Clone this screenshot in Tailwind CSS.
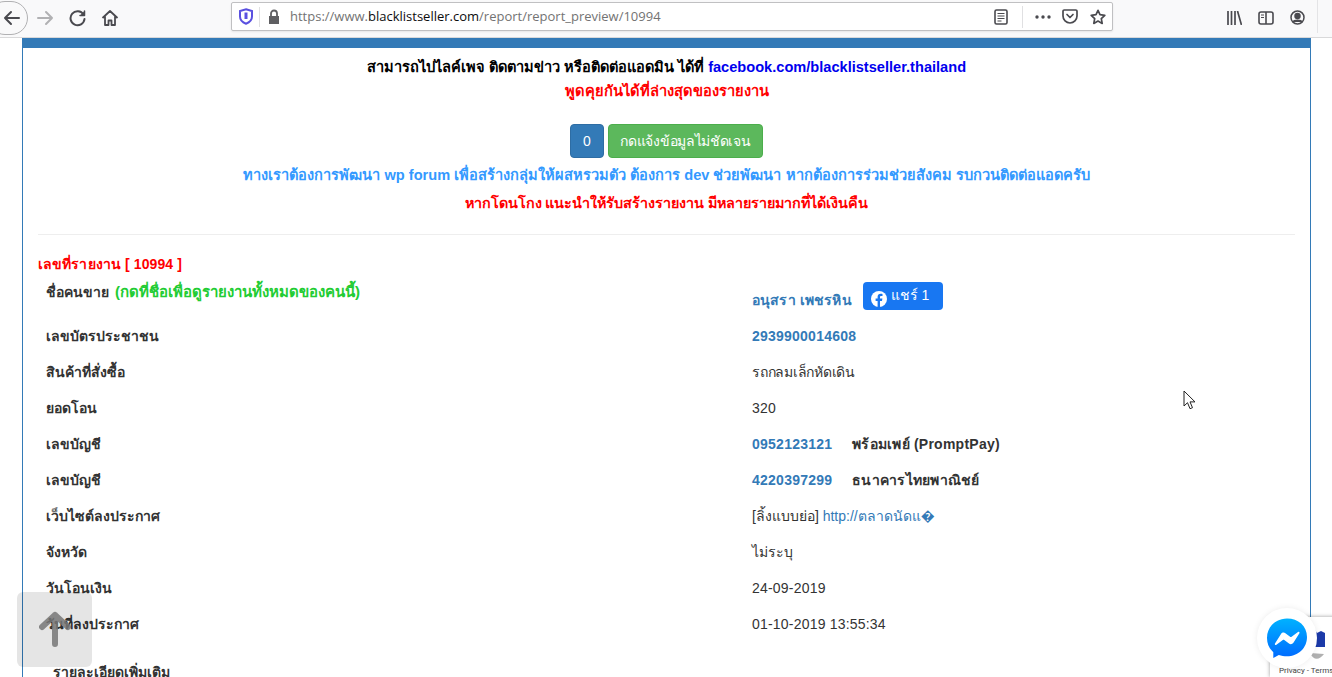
<!DOCTYPE html>
<html><head><meta charset="utf-8"><script src="https://cdn.jsdelivr.net/npm/@tailwindcss/browser@4"></script></head>
<body class="bg-white">
<div class="relative w-[1332px] h-[677px] overflow-hidden bg-white font-['Liberation_Sans','Noto_Sans',sans-serif] text-[14px] text-[#333]">
  <!-- toolbar -->
  <header class="h-[38px] bg-[#f9f9fa] border-b border-[#d9d9da] flex items-center relative">
    <div class="w-[40px] h-[34px] -ml-[12px] mr-[8px] mt-[-1px] rounded-full border border-[#b1b1b3] bg-[#f9f9fa] flex items-center justify-center shrink-0">
      <svg class="ml-[8px]" width="18" height="18" viewBox="0 0 18 18" fill="none" stroke="#4a4a4f" stroke-width="2" stroke-linecap="round" stroke-linejoin="round"><path d="M16 9H2M8 3L2 9l6 6"/></svg>
    </div>
    <svg class="mr-[15px] -mt-[2px] shrink-0" width="18" height="18" viewBox="0 0 18 18" fill="none" stroke="#b1b1b3" stroke-width="2" stroke-linecap="round" stroke-linejoin="round"><path d="M2 9h14M10 3l6 6-6 6"/></svg>
    <svg class="mr-[14px] -mt-[2px] shrink-0" width="18" height="18" viewBox="0 0 18 18" fill="none" stroke="#4a4a4f" stroke-width="2" stroke-linecap="round"><path d="M14.5 5.5A7 7 0 1 0 15.5 10"/><path d="M15.5 2v4.5H11" fill="#4a4a4f" stroke-linejoin="round" stroke-width="1.5"/></svg>
    <svg class="mr-[112px] -mt-[2px] shrink-0" width="18" height="18" viewBox="0 0 18 18" fill="none" stroke="#4a4a4f" stroke-width="1.8" stroke-linejoin="round"><path d="M1.5 9L9 2l7.5 7M4 7.5V16h3.5v-4.5h3V16H14V7.5"/></svg>
    <div class="w-[882px] h-[29px] mt-[-4px] bg-white border border-[#c0c0c2] rounded-[2px] flex items-center shrink-0 shadow-[0_1px_2px_rgba(0,0,0,0.08)]">
      <svg class="ml-[6px] mr-[5px] shrink-0" width="16" height="17" viewBox="0 0 16 17" fill="none"><path d="M8 1.2l6 1.8v5.5c0 3.5-2.6 5.9-6 7.2-3.4-1.3-6-3.7-6-7.2V3z" stroke="#5a50e0" stroke-width="2" fill="#fff"/><path d="M8 4.5v6.5" stroke="#5a50e0" stroke-width="3"/></svg>
      <div class="w-px h-[20px] bg-[#e0e0e2] mr-[6px]"></div>
      <svg class="mr-[8px] shrink-0" width="16" height="16" viewBox="0 0 16 16"><path d="M3 7h10v8H3z" fill="#5f5f62"/><path d="M5 7V4.5a3 3 0 0 1 6 0V7" fill="none" stroke="#5f5f62" stroke-width="1.8"/></svg>
      <div class="mt-[1px] font-['Open_Sans',sans-serif] text-[13px] text-[#737373] whitespace-nowrap">https://www.<span class="text-[#0c0c0d]">blacklistseller.com</span>/report/report_preview/10994</div>
      <div class="ml-auto flex items-center">
        <svg width="14" height="16" viewBox="0 0 14 16" fill="none" stroke="#4a4a4f"><rect x="1" y="1" width="12" height="14" rx="1.5" stroke-width="1.6"/><path d="M3.5 4.5h7M3.5 7h7M3.5 9.5h7M3.5 12h4" stroke-width="1.2"/></svg>
        <div class="w-px h-[22px] bg-[#e0e0e2] ml-[14px] mr-[12px]"></div>
        <svg class="mr-[11px]" width="16" height="4" viewBox="0 0 16 4" fill="#4a4a4f"><circle cx="2" cy="2" r="1.7"/><circle cx="8" cy="2" r="1.7"/><circle cx="14" cy="2" r="1.7"/></svg>
        <svg class="mr-[12px]" width="16" height="15" viewBox="0 0 16 15" fill="none" stroke="#4a4a4f" stroke-width="1.7"><path d="M2.2 1h11.6A1.2 1.2 0 0 1 15 2.2V7a7 7 0 0 1-14 0V2.2A1.2 1.2 0 0 1 2.2 1z"/><path d="M5 5.5l3 3 3-3" stroke-linecap="round" stroke-linejoin="round"/></svg>
        <svg class="mr-[6px]" width="16" height="16" viewBox="0 0 16 16" fill="none" stroke="#4a4a4f" stroke-width="1.7" stroke-linejoin="round"><path d="M8 1.3l2 4.4 4.8.6-3.5 3.3.9 4.8L8 12.1l-4.2 2.3.9-4.8L1.200 6.300 6 5.700z"/></svg>
      </div>
    </div>
    <svg class="ml-[114px] -mt-[2px] shrink-0" width="15" height="14" viewBox="0 0 15 14" fill="none" stroke="#4a4a4f" stroke-width="1.700"><path d="M1 0v14M4.500 0v14M8 0v14M10.500 0l4 14"/></svg>
    <svg class="ml-[16px] -mt-[2px] shrink-0" width="16" height="14" viewBox="0 0 16 14" fill="none" stroke="#4a4a4f" stroke-width="1.600"><rect x="1" y="1" width="14" height="12" rx="2"/><path d="M8 1v12"/><path d="M3 4h3M3 6.500h3" stroke-width="1.200"/></svg>
    <svg class="ml-[16px] -mt-[2px] shrink-0" width="15" height="15" viewBox="0 0 15 15" fill="none" stroke="#4a4a4f" stroke-width="1.500"><circle cx="7.500" cy="7.500" r="6.500"/><circle cx="7.500" cy="6" r="2.500" fill="#4a4a4f"/><path d="M3 12c1-2.500 8-2.500 9 0" fill="#4a4a4f"/></svg>
    <div class="absolute left-[1317px] top-0 w-px h-[33px] bg-[#e4e4e6]"></div>
  </header>

  <!-- panel -->
  <main class="mx-[22px] w-[1289px] border-x border-[#337ab7]">
    <div class="h-[10px] bg-[#337ab7]"></div>
    <section class="px-[15px] text-center font-bold">
      <p class="mt-[9px] leading-[20px] text-[14.6px] text-black">สามารถไปไลค์เพจ ติดตามข่าว หรือติดต่อแอดมิน ได้ที่ <a class="text-[#0000ee]">facebook.com/blacklistseller.thailand</a></p>
      <p class="mt-[4px] leading-[20px] text-[14.7px] text-[#ff0000]">พูดคุยกันได้ที่ล่างสุดของรายงาน</p>
      <div class="mt-[23px] flex justify-center gap-[4px] font-normal text-white">
        <span class="h-[34px] w-[34px] flex items-center justify-center rounded-[4px] bg-[#337ab7] border border-[#2e6da4]">0</span>
        <span class="h-[34px] w-[155px] flex items-center justify-center rounded-[4px] bg-[#5cb85c] border border-[#4cae4c] tracking-[-0.3px]">กดแจ้งข้อมูลไม่ชัดเจน</span>
      </div>
      <p class="mt-[7px] leading-[20px] text-[14.6px] text-[#3399ff]">ทางเราต้องการพัฒนา wp forum เพื่อสร้างกลุ่มให้ผสหรวมตัว ต้องการ dev ช่วยพัฒนา หากต้องการร่วมช่วยสังคม รบกวนติดต่อแอดครับ</p>
      <p class="mt-[8px] leading-[20px] text-[14.35px] text-[#ff0000]">หากโดนโกง แนะนำให้รับสร้างรายงาน มีหลายรายมากที่ได้เงินคืน</p>
    </section>
    <hr class="mx-[15px] mt-[21px] border-t border-[#eeeeee]">
    <section class="px-[15px]">
      <p class="mt-[19px] leading-[20px] font-bold tracking-[0.1px] text-[#ff0000]">เลขที่รายงาน [ 10994 ]</p>
      <dl class="grid grid-cols-[706px_1fr] pl-[8px] auto-rows-[36px] mt-[8px]">
        <dt class="font-bold pt-[2px] leading-[16px]">ชื่อคนขาย <span class="ml-[2px] text-[15px] text-[#22cc33]">(กดที่ชื่อเพื่อดูรายงานทั้งหมดของคนนี้)</span></dt>
        <dd class="flex items-start font-bold text-[#337ab7] leading-[20px]"><span class="mt-[8px] tracking-[0.15px]">อนุสรา เพชรหิน</span>
          <span class="ml-[11px] h-[28px] w-[80px] rounded-[4px] bg-[#1877f2] text-white font-normal flex items-center pl-[8px] gap-[4px]">
            <svg class="mt-[5px]" width="16" height="16" viewBox="0 0 16 16"><circle cx="8" cy="8" r="8" fill="#fff"/><path d="M9 16v-6h2l.4-2.400H9V6.300c0-.7.3-1.200 1.300-1.200h1.200V3c-.5-.1-1.200-.2-1.800-.2-1.900 0-3.100 1.100-3.100 3.200v1.600H4.600V10h2v6z" fill="#1877f2"/></svg>
            <span class="-mt-[2px] whitespace-nowrap">แชร์ 1</span></span></dd>

        <dt class="font-bold flex items-center h-[36px]">เลขบัตรประชาชน</dt>
        <dd class="flex items-center font-bold text-[#337ab7] tracking-[0.23px]">2939900014608</dd>
        <dt class="font-bold flex items-center">สินค้าที่สั่งซื้อ</dt>
        <dd class="flex items-center tracking-[-0.25px]">รถกลมเล็กหัดเดิน</dd>
        <dt class="font-bold flex items-center">ยอดโอน</dt>
        <dd class="flex items-center tracking-[0.2px]">320</dd>
        <dt class="font-bold flex items-center">เลขบัญชี</dt>
        <dd class="flex items-center font-bold tracking-[0.25px]"><span class="text-[#337ab7] w-[100px]">0952123121</span>พร้อมเพย์ (PromptPay)</dd>
        <dt class="font-bold flex items-center">เลขบัญชี</dt>
        <dd class="flex items-center font-bold tracking-[0.25px]"><span class="text-[#337ab7] w-[100px]">4220397299</span>ธนาคารไทยพาณิชย์</dd>
        <dt class="font-bold flex items-center">เว็บไซต์ลงประกาศ</dt>
        <dd class="flex items-center whitespace-pre">[ลิ้งแบบย่อ] <a class="text-[#337ab7]">http://ตลาดนัดแ�</a></dd>
        <dt class="font-bold flex items-center">จังหวัด</dt>
        <dd class="flex items-center">ไม่ระบุ</dd>
        <dt class="font-bold flex items-center">วันโอนเงิน</dt>
        <dd class="flex items-center tracking-[0.2px]">24-09-2019</dd>
        <dt class="font-bold flex items-center">วันที่ลงประกาศ</dt>
        <dd class="flex items-center tracking-[0.2px]">01-10-2019 13:55:34</dd>
      </dl>
      <p class="mt-[20px] ml-[15px] font-bold leading-[20px]">รายละเอียดเพิ่มเติม</p>
    </section>
  </main>

  <!-- cursor -->
  <svg class="absolute left-[1183px] top-[390px]" width="14" height="20" viewBox="0 0 14 20"><path d="M1 1v15l3.500-3.300 2.500 6 2.500-1-2.500-5.800H12z" fill="#fff" stroke="#222" stroke-width="1"/></svg>

  <!-- back to top -->
  <div class="absolute left-[17px] top-[592px] w-[75px] h-[75px] rounded-[6px] bg-black/10 flex items-center justify-center">
    <svg class="-mt-[2px]" width="32" height="36" viewBox="0 0 32 36" fill="none" stroke="#777777" stroke-opacity="0.85" stroke-width="6" stroke-linecap="round" stroke-linejoin="round"><path d="M16 33V4M3 16L16 4l13 12"/></svg>
  </div>

  <!-- recaptcha -->
  <div class="absolute left-[1270px] top-[617px] w-[70px] h-[60px] bg-white shadow-[0_0_4px_rgba(0,0,0,0.4)] overflow-hidden">
    <svg class="absolute left-[40px] top-[8px]" width="20" height="40" viewBox="0 0 20 40"><path d="M4 3l3 5 4-2 4 2V22H4z" fill="#1c3aa9"/><path d="M0 28c3 7 9 8 14 1z" fill="#b0b0b0"/></svg>
    <div class="absolute left-[9px] top-[49px] text-[8px] leading-[9px] text-[#444] font-['Roboto',sans-serif] whitespace-nowrap">Privacy - Terms</div>
  </div>

  <!-- messenger -->
  <div class="absolute left-[1257px] top-[608px] w-[60px] h-[60px] rounded-full bg-white shadow-[0_0_6px_rgba(0,0,0,0.08)] flex items-center justify-center">
    <svg width="42" height="42" viewBox="0 0 42 42"><defs><linearGradient id="mg" x1="0.500" y1="0" x2="0.500" y2="1"><stop offset="0" stop-color="#00b2ff"/><stop offset="1" stop-color="#006aff"/></linearGradient></defs><path d="M21 1.500C9.700 1.500 1 9.800 1 20.900c0 5.800 2.400 10.800 6.300 14.300V41l5.500-3.100c2.500.8 5.300 1.300 8.200 1.300 11.300 0 20-8.300 20-19.300S32.300 1.500 21 1.500z" fill="url(#mg)"/><path d="M9 26.500l6-9.500c1-1.500 3-1.900 4.400-.8l4.700 3.500c.4.300 1 .3 1.500 0l6.400-4.800c.9-.7 2 .4 1.400 1.300l-6 9.500c-1 1.500-3 1.900-4.400.8l-4.700-3.500c-.4-.3-1-.3-1.500 0l-6.400 4.800c-.9.7-2-.4-1.400-1.300z" fill="#fff"/></svg>
  </div>
</div>
</body></html>
